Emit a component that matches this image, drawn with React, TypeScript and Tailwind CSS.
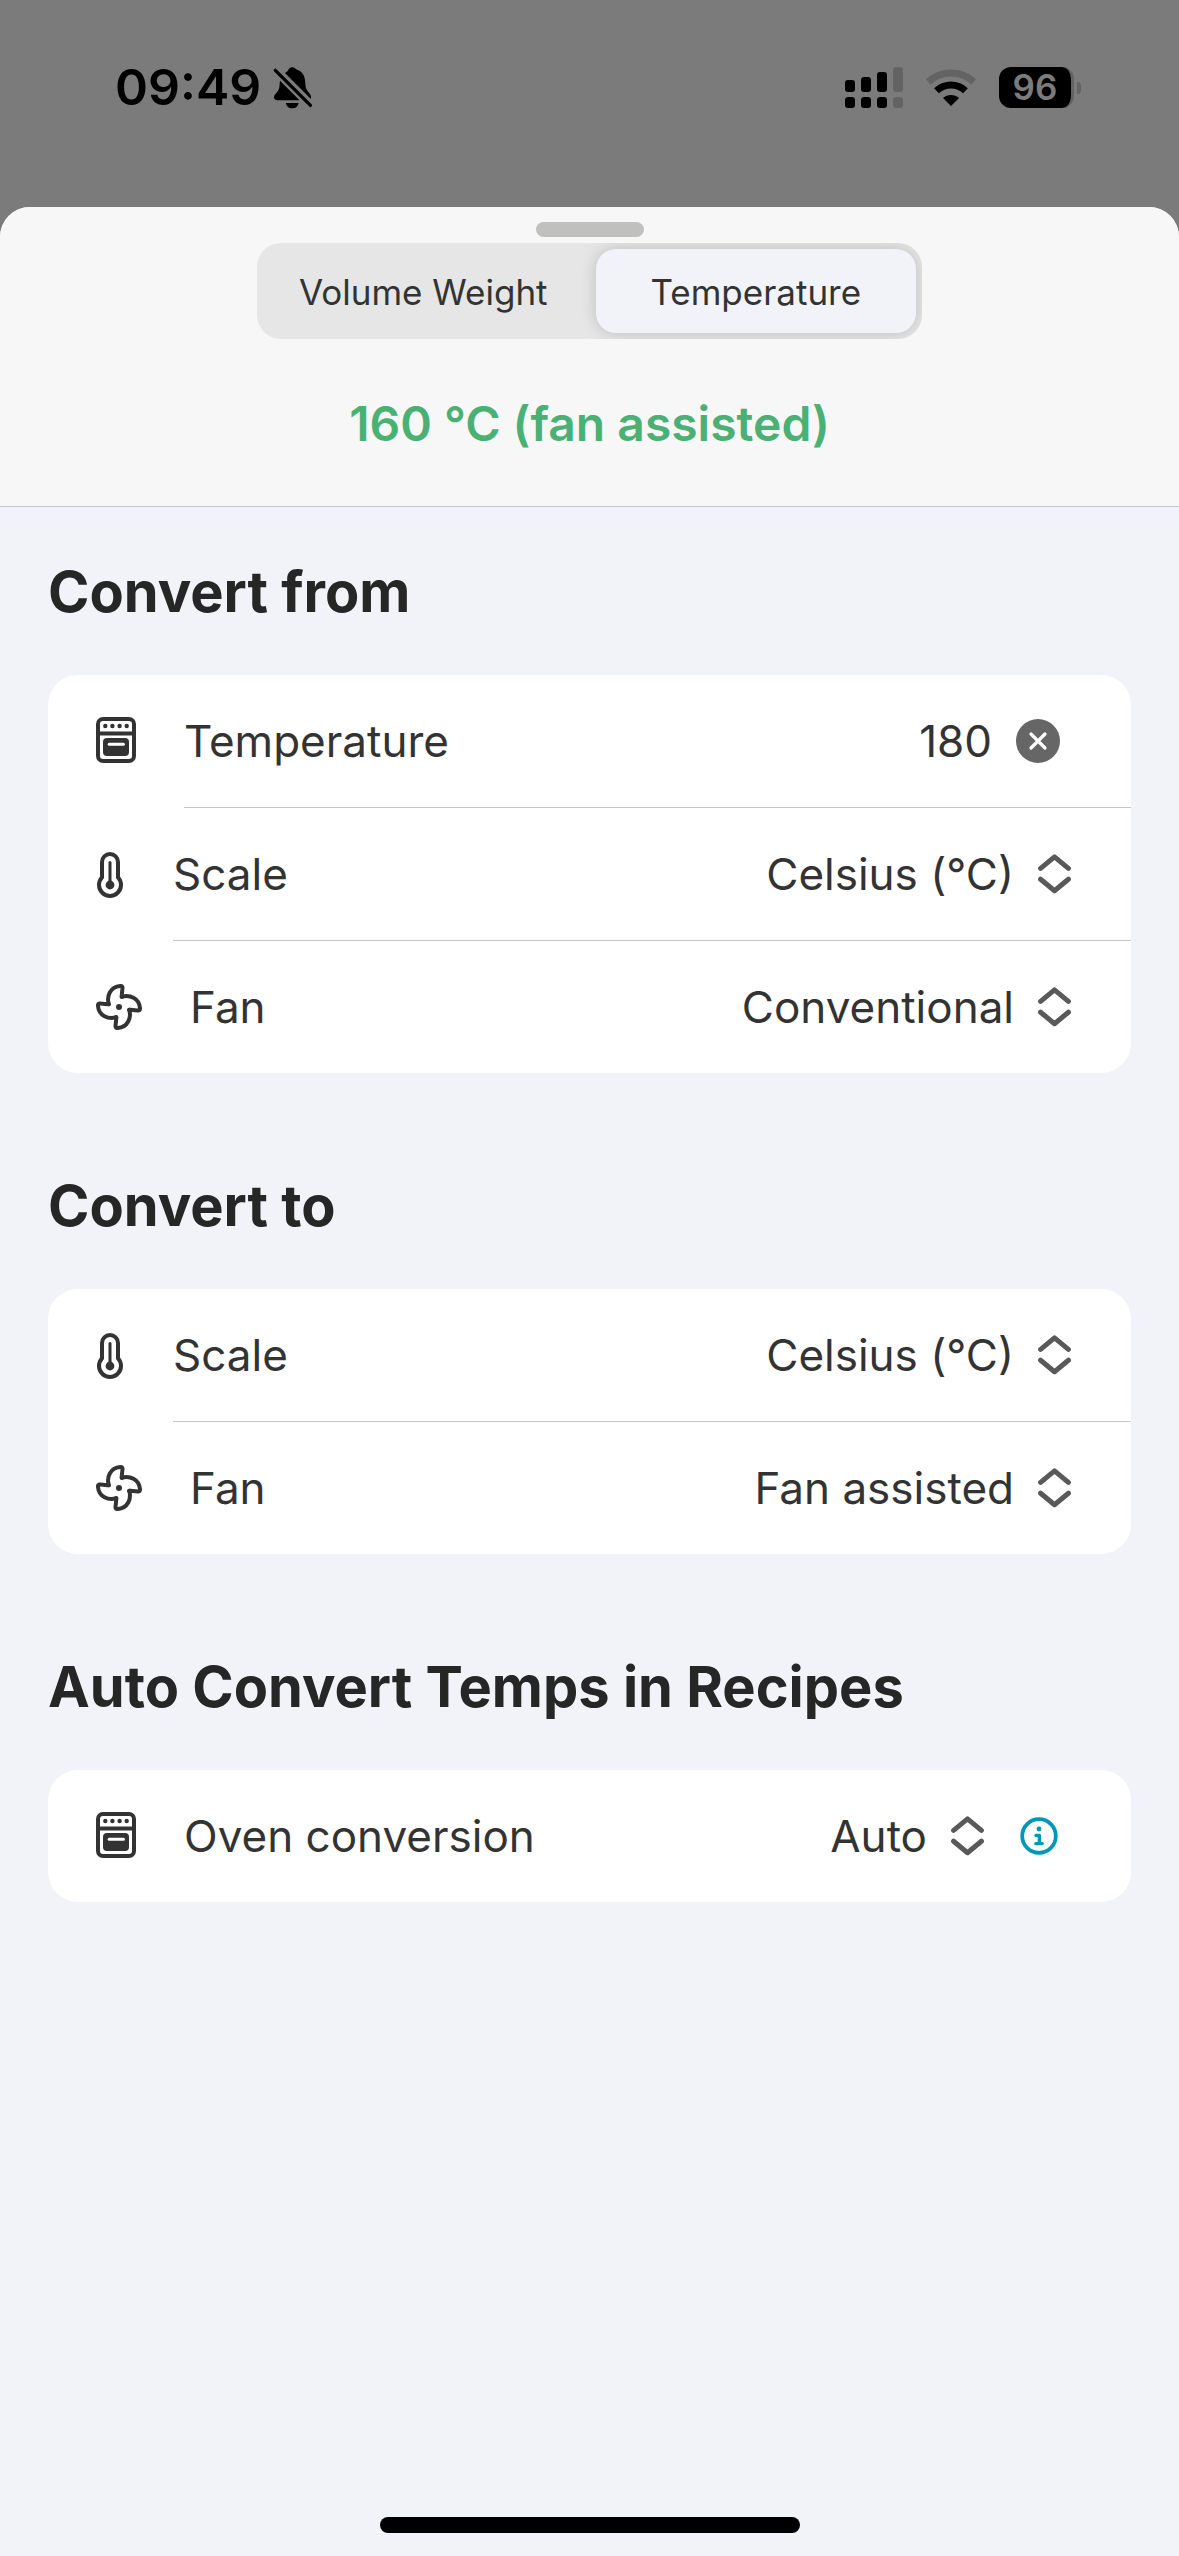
import { useId, useState, type ReactNode } from "react";

function BellSlashIcon() {
  return (
    <svg className="h-[43px] w-[39px]" viewBox="0 0 40 44" aria-hidden="true">
      <path d="M12.3 7.2C14.6 5.6 15.4 4.9 16 3.6C17.4 0.4 22 0.3 23.6 3.4C28.6 5 32.2 8.4 32.8 14.4C33.2 19.4 33.3 22.6 35 25.2C36.6 27.4 39 29.4 39 31.8C39 32.8 38.8 33.4 38.6 33.6Z" />
      <path d="M7.2 15L27.2 35H4.4C1.6 35 .6 33 1.2 31C2 28.6 5.6 26.4 6.4 22.6C6.8 20.4 6.8 17.4 7.2 15Z" />
      <path d="M2.4 4.4L38.4 40.4" stroke="black" strokeWidth="3.4" strokeLinecap="round" />
      <path d="M13.2 37.8H26.2C25.6 41.4 23 43.4 19.7 43.4C16.4 43.4 13.8 41.4 13.2 37.8Z" />
    </svg>
  );
}

function SignalIcon() {
  return (
    <svg className="h-[41px] w-[58px]" viewBox="0 0 58 41" aria-hidden="true">
      <rect y="13" width="10" height="12" rx="3" />
      <rect x="16" y="10" width="10" height="15" rx="3" />
      <rect x="32" y="5" width="10" height="20" rx="3" />
      <rect x="48" width="10" height="25" rx="3" fill="#636363" />
      <rect y="30" width="10" height="11" rx="3" />
      <rect x="16" y="30" width="10" height="11" rx="3" />
      <rect x="32" y="30" width="10" height="11" rx="3" />
      <rect x="48" y="30" width="10" height="11" rx="3" fill="#636363" />
    </svg>
  );
}

function WifiIcon() {
  return (
    <svg className="h-[37px] w-[52px]" viewBox="0 0 52 37" fill="none" aria-hidden="true">
      <path d="M3.3 12.9A33.4 33.4 0 0 1 48.7 12.9" stroke="#636363" strokeWidth="7" />
      <path d="M11.5 21.8A21.3 21.3 0 0 1 40.5 21.8" stroke="black" strokeWidth="7" />
      <path d="M18 29.1A11.6 11.6 0 0 1 34 29.1L26 37Z" fill="black" />
    </svg>
  );
}

function OvenIcon() {
  return (
    <svg className="h-[49px] w-10 shrink-0" viewBox="0 0 40 49" fill="none" aria-hidden="true">
      <rect x="2" y="2" width="36" height="42" rx="5" stroke="#333" strokeWidth="4" />
      <path d="M2 16.4H38" stroke="#333" strokeWidth="4" />
      <g fill="#333">
        <circle cx="9.3" cy="9" r="2.2" />
        <circle cx="16.4" cy="9" r="2.2" />
        <circle cx="23.6" cy="9" r="2.2" />
        <circle cx="30.7" cy="9" r="2.2" />
        <rect x="7" y="21" width="26" height="18" rx="4" />
      </g>
      <path d="M13.2 27.3H27.4" stroke="white" strokeWidth="3" strokeLinecap="round" />
    </svg>
  );
}

function ThermometerIcon() {
  return (
    <svg className="h-[46px] w-[29px] shrink-0" viewBox="0 0 29 46" fill="none" aria-hidden="true">
      <path
        d="M6 10a8 8 0 0 1 16 0v15.4a11 11 0 1 1-16 0Z"
        stroke="#333"
        strokeWidth="4"
        strokeLinejoin="round"
      />
      <path d="M14 10.4V33" stroke="#333" strokeWidth="3" strokeLinecap="round" />
      <circle cx="14" cy="33" r="4.4" fill="#333" />
    </svg>
  );
}

function FanIcon() {
  const blade = "M2.8 -10.2C10.5 -12.6 20.2 -9 21 1.2Q21.2 3.7 18.8 3.5L11.2 2.7Q9.8 2.6 10.2 2.8";
  return (
    <svg
      className="size-[46px] shrink-0"
      viewBox="-23 -23 46 46"
      fill="none"
      stroke="#333"
      strokeWidth="4"
      strokeLinecap="round"
      strokeLinejoin="round"
      aria-hidden="true"
    >
      {[0, 90, 180, 270].map(a => (
        <path key={a} d={blade} transform={`rotate(${a})`} />
      ))}
      <circle r="3" fill="#333" stroke="none" />
    </svg>
  );
}

function ChevronsIcon() {
  return (
    <svg
      className="h-10 w-[33px] shrink-0"
      viewBox="0 0 33 40"
      fill="none"
      stroke="#595959"
      strokeWidth="5"
      strokeLinecap="round"
      strokeLinejoin="round"
      aria-hidden="true"
    >
      <path d="M2.6 14.4L16.5 2.9L30.4 14.4M2.6 25.2L16.5 36.7L30.4 25.2" />
    </svg>
  );
}

interface RowProps {
  id: string;
  icon: ReactNode;
  label: string;
  last?: boolean;
  children: ReactNode;
}

function Row({ id, icon, label, last, children }: RowProps) {
  return (
    <div className="flex items-center gap-12 pl-12">
      {icon}
      <div
        className={`flex flex-1 items-center justify-between pr-[60px] ${
          last ? "h-[132px]" : "h-[133px] border-b border-[#c6c6c8]"
        }`}
      >
        <label htmlFor={id}>{label}</label>
        <div className="flex items-center">{children}</div>
      </div>
    </div>
  );
}

interface PickerProps {
  id: string;
  options: string[];
  initial: string;
}

function Picker({ id, options, initial }: PickerProps) {
  const [value, setValue] = useState(initial);
  return (
    <div className="flex items-center gap-6">
      <select
        id={id}
        value={value}
        onChange={e => setValue(e.target.value)}
        className="appearance-none field-sizing-content bg-transparent outline-none"
      >
        {options.map(o => (
          <option key={o}>{o}</option>
        ))}
      </select>
      <ChevronsIcon />
    </div>
  );
}

function Section({ title, children }: { title: string; children: ReactNode }) {
  return (
    <section>
      <h2 className="mb-[46px] text-[56px] leading-[74px] font-bold text-[#262626]">{title}</h2>
      <div className="rounded-[30px] bg-white text-[44px] leading-[60px] text-[#333]">{children}</div>
    </section>
  );
}

const scales = ["Celsius (°C)", "Fahrenheit (°F)"];
const fans = ["Conventional", "Fan assisted"];
const tabs = ["Volume Weight", "Temperature"];

export default function App() {
  const id = useId();
  const [tab, setTab] = useState("Temperature");
  const [temp, setTemp] = useState("180");

  return (
    <div className="flex min-h-screen flex-col bg-[#7b7b7b] font-['Inter',sans-serif]">
      <div className="flex h-[207px] items-start justify-between pt-[58px] pr-[98px] pl-[115px]">
        <div className="flex h-[59px] items-center gap-3">
          <span className="text-[50px] font-semibold">09:49</span>
          <BellSlashIcon />
        </div>
        <div className="flex h-[59px] items-center gap-[22px]">
          <SignalIcon />
          <WifiIcon />
          <div className="flex items-center gap-[3px]">
            <div className="flex h-[41px] w-[75px] items-center justify-center rounded-xl border-r-3 border-[#636363] bg-black text-[35px] font-semibold text-[#7b7b7b]">
              96
            </div>
            <div className="h-3 w-1 rounded-r-full bg-[#636363]" />
          </div>
        </div>
      </div>

      <div className="flex flex-1 flex-col overflow-hidden rounded-t-[30px] bg-[#f1f3f8]">
        <header className="flex flex-col items-center border-b border-[#c6c6c8] bg-[#f7f7f7] pt-[15px] pb-[52px]">
          <div className="h-[15px] w-[108px] rounded-full bg-[#c0c0be]" />
          <div
            role="tablist"
            className="mt-1.5 flex h-24 w-[665px] gap-3 overflow-hidden rounded-3xl bg-[#e6e6e6] p-1.5"
          >
            {tabs.map(t => (
              <button
                key={t}
                role="tab"
                aria-selected={tab === t}
                onClick={() => setTab(t)}
                className={`flex-1 rounded-[20px] pt-0.5 text-[35px] text-[#333] ${
                  tab === t ? "bg-[#f1f3f8] shadow-[0_0_16px_rgba(0,0,0,0.18)]" : ""
                }`}
              >
                {t}
              </button>
            ))}
          </div>
          <p className="mt-[55px] text-[48px] leading-[60px] font-semibold text-[#4ab074]">
            160 °C (fan assisted)
          </p>
        </header>

        <main className="flex flex-1 flex-col gap-24 px-12 pt-12">
          <Section title="Convert from">
            <Row id={`${id}-temp`} icon={<OvenIcon />} label="Temperature">
              <div className="flex items-center gap-6 pr-[11px]">
                <input
                  id={`${id}-temp`}
                  inputMode="numeric"
                  value={temp}
                  onChange={e => setTemp(e.target.value)}
                  className="field-sizing-content bg-transparent text-right outline-none"
                />
                <button aria-label="Clear" onClick={() => setTemp("")}>
                  <svg className="size-11" viewBox="0 0 44 44" aria-hidden="true">
                    <circle cx="22" cy="22" r="22" fill="#666" />
                    <path
                      d="M15 15L29 29M29 15L15 29"
                      stroke="white"
                      strokeWidth="3.2"
                      strokeLinecap="round"
                    />
                  </svg>
                </button>
              </div>
            </Row>
            <Row id={`${id}-from-scale`} icon={<ThermometerIcon />} label="Scale">
              <Picker id={`${id}-from-scale`} options={scales} initial="Celsius (°C)" />
            </Row>
            <Row id={`${id}-from-fan`} icon={<FanIcon />} label="Fan" last>
              <Picker id={`${id}-from-fan`} options={fans} initial="Conventional" />
            </Row>
          </Section>

          <Section title="Convert to">
            <Row id={`${id}-to-scale`} icon={<ThermometerIcon />} label="Scale">
              <Picker id={`${id}-to-scale`} options={scales} initial="Celsius (°C)" />
            </Row>
            <Row id={`${id}-to-fan`} icon={<FanIcon />} label="Fan" last>
              <Picker id={`${id}-to-fan`} options={fans} initial="Fan assisted" />
            </Row>
          </Section>

          <Section title="Auto Convert Temps in Recipes">
            <Row id={`${id}-auto`} icon={<OvenIcon />} label="Oven conversion" last>
              <Picker id={`${id}-auto`} options={["Auto", "Off"]} initial="Auto" />
              <button aria-label="About oven conversion" className="mr-[13px] ml-9">
                <svg
                  className="size-[38px]"
                  viewBox="0 0 38 38"
                  fill="none"
                  stroke="#0097b9"
                  strokeLinecap="round"
                  strokeLinejoin="round"
                  aria-hidden="true"
                >
                  <circle cx="19" cy="19" r="16.8" strokeWidth="3.8" />
                  <path d="M16 18.4H19.4V26.6M15.8 26.6H22.2" strokeWidth="3.4" />
                  <circle cx="19" cy="12" r="2.4" fill="#0097b9" stroke="none" />
                </svg>
              </button>
            </Row>
          </Section>
        </main>

        <footer className="flex justify-center pb-[23px]">
          <div className="h-4 w-[420px] rounded-full bg-black" />
        </footer>
      </div>
    </div>
  );
}
